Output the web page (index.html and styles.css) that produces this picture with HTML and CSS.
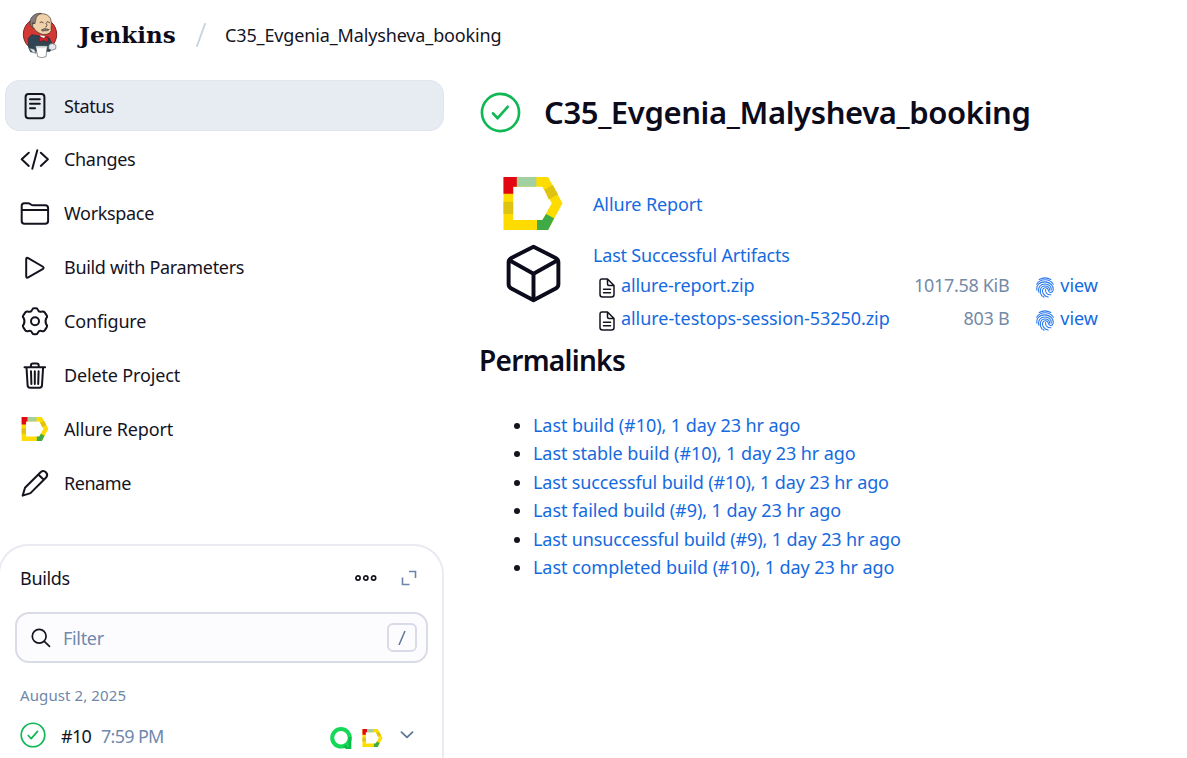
FILE: index.html
```html
<!DOCTYPE html>
<html lang="en">
<head>
<meta charset="utf-8">
<title>C35_Evgenia_Malysheva_booking [Jenkins]</title>
<link rel="stylesheet" href="styles.css">
</head>
<body>
<svg class="defs" width="0" height="0" aria-hidden="true">
  <symbol id="allure" viewBox="0 0 176 158">
    <path fill="#ffdc00" d="M0 0H133L176 78 133 158H0ZM29 29V128H116L144 78 116 29Z" fill-rule="evenodd"/>
    <path fill="#e30613" d="M0 0H40V29H29V50H0Z"/>
    <path fill="#a3d0a0" d="M40 0H98V29H40Z"/>
    <path fill="#dfc313" d="M0 74H29V110H0ZM122 38 147 24 163 52 135 67Z"/>
    <path fill="#3fab46" d="M100 128H116L127 110 151 123 133 158H100Z"/>
  </symbol>
  <symbol id="ok" viewBox="0 0 40 40">
    <g fill="none" stroke="#10b855" stroke-width="2.6" stroke-linecap="round" stroke-linejoin="round"><circle cx="20" cy="20" r="18.1"/><path d="M12.700 20.800 17.200 25.600 27 14.400"/></g>
  </symbol>
  <symbol id="doc" viewBox="0 0 16 20">
    <path fill="none" stroke="#14141f" stroke-width="1.5" stroke-linejoin="round" stroke-linecap="round" d="M3 1H8.500L15 7.500V16.500Q15 19 12.500 19H3.500Q1 19 1 16.500V3.200Q1 1 3 1ZM8.500 1V6Q8.500 7.500 10 7.500H15M4.500 11.200H11.500M4.500 14.800H11.500"/>
  </symbol>
  <symbol id="finger" viewBox="0 0 18 21">
    <g fill="none" stroke="#2878f0" stroke-width="1.05" stroke-linecap="round">
      <path d="M3.200 2.500Q9-.8 14.800 2.500"/>
      <path d="M.7 7.200C4.500 1.300 13.500 1.300 17.300 7.200"/>
      <path d="M1 13.300C-.2 8 3.800 4.900 8.800 4.900 14.500 4.900 18 9.200 17 13.700 16.400 16.200 12.800 16 12.400 13.500 12 10.300 7.300 9.700 6.600 12.900 6 16 8.500 19.300 12.200 20.100"/>
      <path d="M2.900 15.300C1.500 10.200 4.700 7 8.900 7 13.400 7 15.600 10 15.200 13.200"/>
      <path d="M5.900 18.900C3 14.800 4 9.100 9 9 12 9 13.600 11 13.700 13.200"/>
      <path d="M9.500 12.500C9.300 16 11.700 18.100 15 17.700"/>
      <path d="M8 20.300Q7.300 19.800 6.800 19.200"/>
    </g>
  </symbol>
</svg>

<header class="topbar">
  <svg class="logo" viewBox="66 36 114 141">
    <circle cx="120" cy="103" r="50" fill="#d33833" stroke="#7d2424" stroke-width="3"/>
    <path fill="#2f4554" stroke="#20303c" stroke-width="2" d="M95 104 120 108 148 114 158 136 150 154 92 156 86 143 85 115Z"/>
    <path fill="#f3f0e9" d="M119 106 134 108 137 116 128 120Z"/>
    <path fill="#efd1aa" stroke="#3c2d26" stroke-width="2" d="M103 53C110 37 144 36 152 57 157 73 151 82 154 91 150 105 128 107 116 98 109 94 104 90 102 84 92 84 91 66 102 71Z"/>
    <path fill="#827b78" stroke="#413b3b" stroke-width="2" d="M91 76C86 57 99 38 124 40 108 45 108 57 105 71L98 68 98 83Z"/>
    <path fill="none" stroke="#413029" stroke-width="2.500" stroke-linecap="round" d="M120 67Q125 63 130 68M140 66Q144 63 149 68M138 70Q145 79 137 81"/>
    <path fill="#8b8077" stroke="#4c3d35" stroke-width="2" d="M124 90Q133 82 148 89 138 94 132 92 128 96 124 90Z"/>
    <path fill="#d51f2a" stroke="#641b20" stroke-width="2" d="M117 109 130 115 144 110 144 127 131 121 118 126Z"/>
    <path fill="#fff" stroke="#5a666d" stroke-width="2" d="M107 138H142L138 170Q126 176 113 170Z"/>
    <path fill="#e5e9eb" stroke="#58666d" stroke-width="2" d="M147 134Q157 126 168 136L167 147 155 151 146 146ZM87 145 103 148 108 160 98 157Z"/>
    <path stroke="#bdc5ca" stroke-width="2" d="M111 143H137"/>
  </svg>
  <span class="brand">Jenkins</span>
  <svg class="slash" viewBox="0 0 10 24"><path d="M9 1 1 23" stroke="#c9d5e2" stroke-width="2" stroke-linecap="round"/></svg>
  <span class="crumb">C35_Evgenia_Malysheva_booking</span>
</header>

<div class="page">
  <aside class="side">
    <nav class="tasks">
      <a class="task active"><svg class="ico" viewBox="0 0 30 30"><rect x="5.600" y="2.900" width="18.800" height="24.400" rx="3"/><path d="M10 8.300H19.800M10 12.700H19.800M10 17.300H15"/></svg><span class="snug">Status</span></a>
      <a class="task"><svg class="ico" viewBox="0 0 30 30"><path d="M8.800 8.700 1.700 15.300 8.800 21.900M20.800 8.700 27.900 15.300 20.800 21.900M17.300 6.300 12.300 24.700"/></svg><span>Changes</span></a>
      <a class="task"><svg class="ico" viewBox="0 0 30 30"><path d="M1.700 23V7.800Q1.700 5.200 4.300 5.200H7.900Q9.200 5.200 10.300 6L10.900 6.500Q12 7.300 13.300 7.300H25.200Q28.100 7.300 28.100 10.200V23Q28.100 25.800 25.200 25.800H4.500Q1.700 25.800 1.700 23ZM1.700 12H28.100"/></svg><span>Workspace</span></a>
      <a class="task"><svg class="ico" viewBox="0 0 30 30"><path d="M6.200 7.200V24.100Q6.200 26.400 8.200 25.300L22.600 17.100Q24.600 15.800 22.600 14.500L8.200 6.100Q6.200 5 6.200 7.200Z"/></svg><span>Build with Parameters</span></a>
      <a class="task"><svg class="ico" viewBox="60 214 90 90"><path class="gear" d="M96 226Q98 221 102 221H108Q112 221 114 226 116 233 124 231 131 229 134 233L140 242Q143 247 139 250 134 260 139 270 143 273 140 278L134 287Q131 291 124 289 116 287 114 294 112 299 108 299H102Q98 299 96 294 94 287 86 289 79 291 76 287L70 278Q67 273 71 270 76 260 71 250 67 247 70 242L76 233Q79 229 86 231 94 233 96 226Z"/><circle class="gear" cx="105" cy="260" r="12"/></svg><span class="loose">Configure</span></a>
      <a class="task"><svg class="ico" viewBox="0 0 30 30"><path d="M4.500 7.300H25.100M6.500 7.500 7.600 25.300Q7.700 27.700 10 27.700H19.600Q21.900 27.700 22 25.300L23.100 7.500M10.900 7V5.400Q10.900 3.500 12.800 3.500H16.800Q18.700 3.500 18.700 5.400V7M11 11.300 11.400 24M14.800 11.300V24M18.600 11.300 18.200 24"/></svg><span class="loose">Delete Project</span></a>
      <a class="task"><svg class="ico allure"><use href="#allure"/></svg><span class="loose">Allure Report</span></a>
      <a class="task"><svg class="ico" viewBox="0 0 30 30"><path d="M2.700 27.600 5 19.800 20.600 4.200Q23.400 1.800 25.900 4.200 28.400 6.800 26.100 9.500L10.500 25.100ZM18.300 6.500 23.800 11.800"/></svg><span class="snug">Rename</span></a>
    </nav>

    <section class="builds">
      <div class="builds-head">
        <span class="builds-title">Builds</span>
        <svg class="dots" viewBox="0 0 22 8"><g fill="none" stroke="#14141f" stroke-width="1.700"><circle cx="3" cy="4" r="2.100"/><circle cx="10.800" cy="4" r="2.100"/><circle cx="18.600" cy="4" r="2.100"/></g></svg>
        <svg class="expand" viewBox="0 0 16 16"><path d="M8 1.500H14.500V8M1.500 7.500V14.500H8.500" fill="none" stroke="#6c84ac" stroke-width="1.600"/></svg>
      </div>
      <div class="filter">
        <svg class="search" viewBox="0 0 20 20"><g fill="none" stroke="#14141f" stroke-width="1.700" stroke-linecap="round"><circle cx="8.200" cy="8.200" r="6.900"/><path d="M13.300 13.300 18.500 18.300"/></g></svg>
        <span class="placeholder">Filter</span>
        <span class="key"><svg class="keyslash" viewBox="0 0 8 16"><path d="M7 1 1 15" stroke="#5d7699" stroke-width="1.500"/></svg></span>
      </div>
      <div class="date">August 2, 2025</div>
      <div class="build">
        <svg class="build-ok"><use href="#ok"/></svg>
        <span class="num">#10</span>
        <span class="time">7:59 PM</span>
        <svg class="testops" viewBox="0 0 24 22"><circle cx="12" cy="10.800" r="8.800" fill="none" stroke="#14d957" stroke-width="4"/><path d="M20.800 10V21.800Q17 21 15.500 18.500" fill="none" stroke="#09bf49" stroke-width="3"/></svg>
        <svg class="mini-allure"><use href="#allure"/></svg>
        <svg class="chev" viewBox="0 0 14 8"><path d="M1.500 1.200 7 6.300 12.500 1.200" fill="none" stroke="#5d7699" stroke-width="1.800" stroke-linecap="round" stroke-linejoin="round"/></svg>
      </div>
    </section>
  </aside>

  <main class="main">
    <div class="title"><svg class="title-ok"><use href="#ok"/></svg><h1>C35_Evgenia_Malysheva_booking</h1></div>
    <div class="report"><svg class="big-allure"><use href="#allure"/></svg><a class="link">Allure Report</a></div>
    <div class="artifacts">
      <svg class="box" viewBox="0 0 56 60"><path d="M28 2.700 50.500 14.200Q53.300 15.800 53.300 18.500V41Q53.300 43.500 51 45L28 57.200 5 45Q2.700 43.500 2.700 41V18.500Q2.700 15.800 5.500 14.200ZM3.500 16.500 28 30.200 52.500 16.500M28 30.200V57" fill="none" stroke="#0b0b1c" stroke-width="4" stroke-linejoin="round"/></svg>
      <div class="files">
        <a class="link files-title">Last Successful Artifacts</a>
        <div class="file"><svg class="doc"><use href="#doc"/></svg><a class="link">allure-report.zip</a><span class="size">1017.58 KiB</span><svg class="finger"><use href="#finger"/></svg><a class="link view">view</a></div>
        <div class="file"><svg class="doc"><use href="#doc"/></svg><a class="link session">allure-testops-session-53250.zip</a><span class="size">803 B</span><svg class="finger"><use href="#finger"/></svg><a class="link view">view</a></div>
      </div>
    </div>
    <h2>Permalinks</h2>
    <ul class="permalinks">
      <li><a class="link">Last build (#10), 1 day 23 hr ago</a></li>
      <li><a class="link">Last stable build (#10), 1 day 23 hr ago</a></li>
      <li><a class="link tight">Last successful build (#10), 1 day 23 hr ago</a></li>
      <li><a class="link">Last failed build (#9), 1 day 23 hr ago</a></li>
      <li><a class="link tight">Last unsuccessful build (#9), 1 day 23 hr ago</a></li>
      <li><a class="link">Last completed build (#10), 1 day 23 hr ago</a></li>
    </ul>
  </main>
</div>
</body>
</html>
```

FILE: styles.css
```css
* { box-sizing: border-box; }
body {
  margin: 0;
  height: 758px;
  overflow: hidden;
  background: #fff;
  color: #14141f;
  font: 18px/26px "Noto Sans", "Open Sans", sans-serif;
  letter-spacing: -0.32px;
  white-space: nowrap;
}
svg { display: block; flex: none; }
.defs { position: absolute; }

.topbar { display: flex; align-items: center; height: 70px; padding-left: 22px; }
.logo { width: 38px; height: 47px; }
.brand { width: 118px; margin-left: 19px; font: bold 23px/30px "DejaVu Serif", serif; letter-spacing: 0; color: #0b0b1c; }
.slash { width: 10px; height: 24px; margin-left: -1px; }
.crumb { margin-left: 19px; letter-spacing: -0.14px; }

.page { display: flex; height: 688px; }
.side { width: 444px; flex: none; padding-top: 10px; }
.tasks { display: flex; flex-direction: column; gap: 2.9px; padding-left: 5px; }
.task { display: flex; align-items: center; gap: 14px; height: 51px; padding-left: 15px; border-radius: 14px; }
.active { background: #e7ebf2; border: 1px solid #dfe6ee; padding-left: 14px; }
.snug { letter-spacing: -0.45px; }
.loose { letter-spacing: -0.15px; }
.ico { width: 30px; height: 30px; fill: none; stroke: #14141f; stroke-width: 2; stroke-linecap: round; stroke-linejoin: round; }
.gear { stroke-width: 6; }
.allure { width: 28px; height: 24px; margin: 1px 1px 0 1px; stroke: none; }

.builds { height: 230px; margin: 36px 0 0 -2px; padding: 0 14px 0 15px; border: 2px solid #e9eaf2; border-radius: 30px 30px 0 0; border-bottom: 0; }
.builds-head { display: flex; align-items: center; height: 64px; padding: 0 11px 0 5px; }
.builds-title { flex: 1; }
.dots { width: 22px; height: 8px; margin-right: 24px; }
.expand { width: 16px; height: 16px; }
.filter { display: flex; align-items: center; height: 51px; margin-top: 2px; padding: 0 9px 0 14px; border: 2px solid #d9dce6; border-radius: 14px; background: #fcfcfe; }
.search { width: 20px; height: 20px; }
.placeholder { flex: 1; margin-left: 12px; color: #7088ac; }
.key { display: flex; align-items: center; justify-content: center; width: 30px; height: 29px; border: 2px solid #d9dce8; border-radius: 6px; }
.keyslash { width: 8px; height: 16px; }
.date { margin: 19px 0 0 5px; color: #6f87a9; font-size: 15px; letter-spacing: 0.1px; }
.build { display: flex; align-items: center; height: 30px; margin-top: 13px; padding: 0 14px 0 5px; }
.build-ok { width: 26px; height: 26px; margin-top: -3px; }
.num { width: 40px; margin-left: 15px; letter-spacing: -0.7px; }
.time { flex: 1; color: #7088ac; letter-spacing: -0.7px; }
.testops { width: 24px; height: 22px; margin-top: 3px; }
.mini-allure { width: 21px; height: 18px; margin: 3px 17px 0 9px; }
.chev { width: 14px; height: 8px; margin-top: -2px; }

.main { flex: 1; padding: 21px 0 0 36px; }
.title { display: flex; align-items: center; height: 42px; gap: 23px; }
.title-ok { width: 41px; height: 41px; }
h1, h2 { margin: 0; color: #0b0b1c; font-weight: 600; }
h1 { font-size: 31px; line-height: 42px; letter-spacing: -0.37px; }
h2 { font-size: 28px; line-height: 36px; letter-spacing: -0.7px; margin: 7px 0 0 -1px; }
.link { color: #146ae0; letter-spacing: -0.13px; }
.report { display: flex; align-items: center; height: 54px; margin: 44px 0 0 23px; gap: 30px; }
.big-allure { width: 60px; height: 53px; margin-top: -1px; }
.artifacts { display: flex; align-items: flex-start; gap: 31px; margin: 11px 0 0 25px; }
.box { width: 57px; height: 59px; margin-top: 2px; }
.files { width: 505px; }
.files-title { display: block; height: 26px; letter-spacing: -0.2px; }
.file { display: flex; align-items: center; height: 33px; padding-left: 6px; }
.doc { width: 16px; height: 20px; margin: 7px 6px 0 0; }
.session { letter-spacing: -0.06px; }
.size { flex: 1; color: #7689a6; text-align: right; }
.finger { width: 18px; height: 21px; margin: 6px 6px 0 27px; }
.view { letter-spacing: 0; }
h2 { padding-top: 1px; }
.permalinks { margin: 33px 0 0; padding-left: 53px; line-height: 28.4px; }
.permalinks .link { letter-spacing: -0.07px; }
.permalinks .tight { letter-spacing: -0.11px; }
```
